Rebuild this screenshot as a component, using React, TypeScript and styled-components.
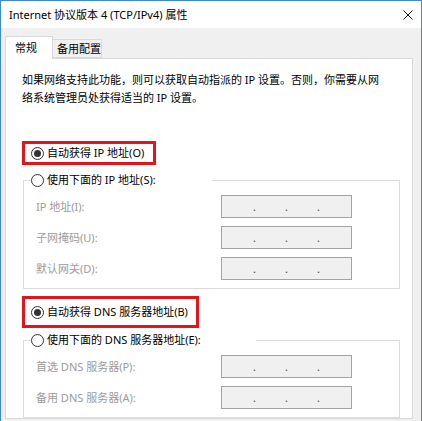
import styled, { createGlobalStyle } from 'styled-components'

const GlobalStyle = createGlobalStyle`
  html, body {
    margin: 0;
    padding: 0;
    background: #ffffff;
  }
  body {
    font-family: "Noto Sans", "Noto Sans CJK SC", sans-serif;
    font-size: 11px;
    color: #000;
  }
`

type RadioProps = {
  checked?: boolean
  label: string
}

function RadioOption({ checked, label }: RadioProps) {
  return (
    <RadioRow>
      <RadioCircle>{checked && <RadioDot />}</RadioCircle>
      <span>{label}</span>
    </RadioRow>
  )
}

function IpBox() {
  return (
    <IpInput>
      <span>.</span>
      <span>.</span>
      <span>.</span>
    </IpInput>
  )
}

type GroupProps = {
  legendWidth: number
  label: string
  rows: string[]
}

function Group({ legendWidth, label, rows }: GroupProps) {
  return (
    <GroupBox>
      <GroupLegend $width={legendWidth}>
        <RadioOption label={label} />
      </GroupLegend>
      <Rows>
        {rows.map((r) => (
          <FieldRow key={r}>
            <FieldLabel>{r}</FieldLabel>
            <IpBox />
          </FieldRow>
        ))}
      </Rows>
    </GroupBox>
  )
}

export default function App() {
  return (
    <>
      <GlobalStyle />
      <Window>
        <TitleBar>
          <Title>Internet 协议版本 4 (TCP/IPv4) 属性</Title>
          <svg width="10" height="10" viewBox="0 0 10 10">
            <path d="M0.5 0.5 L9.5 9.5 M9.5 0.5 L0.5 9.5" stroke="#111" strokeWidth="1" />
          </svg>
        </TitleBar>
        <Body>
          <TabStrip>
            <Tab $active>常规</Tab>
            <Tab>备用配置</Tab>
          </TabStrip>
          <Panel>
            <Description>
              如果网络支持此功能，则可以获取自动指派的 IP 设置。否则，你需要从网
              <br />
              络系统管理员处获得适当的 IP 设置。
            </Description>
            <Highlight $width={134} $height={24} $top={34}>
              <RadioOption checked label="自动获得 IP 地址(O)" />
            </Highlight>
            <GroupSlot $top={6}>
              <Group
                legendWidth={181}
                label="使用下面的 IP 地址(S):"
                rows={['IP 地址(I):', '子网掩码(U):', '默认网关(D):']}
              />
            </GroupSlot>
            <Highlight $width={177} $height={32} $top={7}>
              <RadioOption checked label="自动获得 DNS 服务器地址(B)" />
            </Highlight>
            <GroupSlot $top={3}>
              <Group
                legendWidth={225}
                label="使用下面的 DNS 服务器地址(E):"
                rows={['首选 DNS 服务器(P):', '备用 DNS 服务器(A):']}
              />
            </GroupSlot>
          </Panel>
        </Body>
      </Window>
    </>
  )
}

const Window = styled.div`
  box-sizing: border-box;
  width: 422px;
  height: 421px;
  overflow: hidden;
  background: #f0f0f0;
  border: 1px solid #3c8ad6;
  border-bottom: none;
  display: flex;
  flex-direction: column;
`

const TitleBar = styled.div`
  height: 27px;
  flex-shrink: 0;
  background: #ffffff;
  display: flex;
  align-items: center;
  justify-content: space-between;
  padding: 0 8px 0 8px;
`

const Title = styled.div`
  font-size: 11px;
  line-height: 16px;
  color: #000;
`

const Body = styled.div`
  padding: 8px 8px 0 4px;
  display: flex;
  flex-direction: column;
`

const TabStrip = styled.div`
  height: 22px;
  display: flex;
  align-items: flex-end;
`

const Tab = styled.div<{ $active?: boolean }>`
  box-sizing: border-box;
  position: relative;
  z-index: 1;
  display: flex;
  align-items: center;
  white-space: nowrap;
  line-height: 16px;
  border: 1px solid #d9d9d9;
  border-bottom: ${(p) => (p.$active ? 'none' : '1px solid #d9d9d9')};
  background: ${(p) => (p.$active ? '#ffffff' : '#f0f0f0')};
  width: ${(p) => (p.$active ? '48px' : '50px')};
  height: ${(p) => (p.$active ? '23px' : '19px')};
  margin-bottom: ${(p) => (p.$active ? '-1px' : '0')};
  margin-left: ${(p) => (p.$active ? '0' : '-1px')};
  padding-left: ${(p) => (p.$active ? '9px' : '4px')};
  padding-top: ${(p) => (p.$active ? '0' : '1px')};
  font-size: 11px;
`

const Panel = styled.div`
  flex: 1;
  background: #ffffff;
  border: 1px solid #d9d9d9;
  padding: 12px 0 0 16px;
`

const Description = styled.p`
  margin: 0;
  font-size: 11px;
  line-height: 18px;
`

const Highlight = styled.div<{ $width: number; $height: number; $top: number }>`
  box-sizing: border-box;
  width: ${(p) => p.$width}px;
  height: ${(p) => p.$height}px;
  margin-top: ${(p) => p.$top}px;
  border: 3px solid #e3141b;
  display: flex;
  align-items: center;
  padding-left: 6px;
`

const GroupSlot = styled.div<{ $top: number }>`
  margin-top: ${(p) => p.$top}px;
`

const GroupBox = styled.fieldset`
  box-sizing: border-box;
  width: 377px;
  margin: 0 0 0 1px;
  padding: 0;
  border: 1px solid #dcdcdc;
`

const GroupLegend = styled.legend<{ $width: number }>`
  box-sizing: border-box;
  width: ${(p) => p.$width}px;
  margin-left: 7px;
  padding: 0;
  height: 18px;
`

const RadioRow = styled.div`
  display: flex;
  align-items: center;
  gap: 3px;
  font-size: 11px;
  line-height: 18px;
  color: #000;
  white-space: nowrap;
`

const RadioCircle = styled.span`
  box-sizing: border-box;
  width: 13px;
  height: 13px;
  border: 1px solid #333;
  border-radius: 50%;
  display: flex;
  align-items: center;
  justify-content: center;
  background: #fff;
`

const RadioDot = styled.span`
  width: 7px;
  height: 7px;
  border-radius: 50%;
  background: #333;
`

const Rows = styled.div`
  display: flex;
  flex-direction: column;
  gap: 8px;
  padding: 6px 0 8px 12px;
`

const FieldRow = styled.div`
  display: flex;
  align-items: center;
  height: 23px;
`

const FieldLabel = styled.div`
  width: 185px;
  color: #9b9b9b;
  font-size: 11px;
  line-height: 18px;
`

const IpInput = styled.div`
  box-sizing: border-box;
  width: 131px;
  height: 23px;
  background: #f0f0f0;
  border: 1px solid #a3a3a3;
  display: flex;
  align-items: center;
  gap: 30px;
  padding: 0 0 0 31px;
  font-size: 11px;
  color: #444;

  span {
    width: 2px;
    line-height: 11px;
  }
`
